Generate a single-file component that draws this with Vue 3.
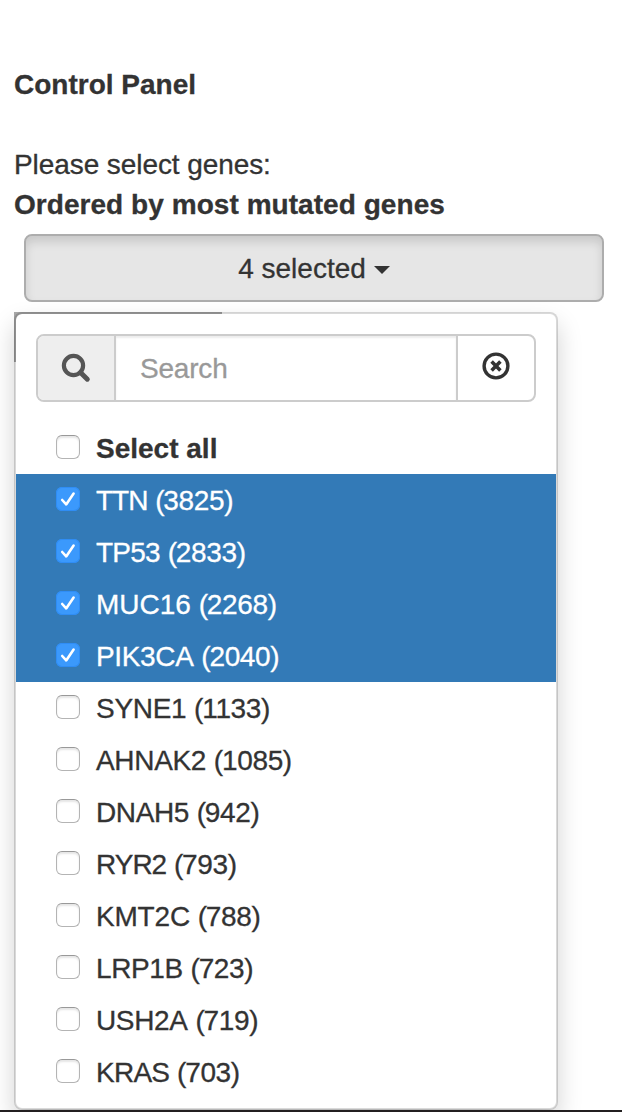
<script setup>
import { ref } from 'vue'

const genes = ref([
  { name: 'TTN', count: 3825, checked: true, tracking: -1 },
  { name: 'TP53', count: 2833, checked: true, tracking: -0.75 },
  { name: 'MUC16', count: 2268, checked: true, tracking: 0 },
  { name: 'PIK3CA', count: 2040, checked: true, tracking: -0.35 },
  { name: 'SYNE1', count: 1133, checked: false, tracking: -0.3 },
  { name: 'AHNAK2', count: 1085, checked: false, tracking: -0.33 },
  { name: 'DNAH5', count: 942, checked: false, tracking: -0.4 },
  { name: 'RYR2', count: 793, checked: false, tracking: -1 },
  { name: 'KMT2C', count: 788, checked: false, tracking: -0.2 },
  { name: 'LRP1B', count: 723, checked: false, tracking: -0.4 },
  { name: 'USH2A', count: 719, checked: false, tracking: -0.35 },
  { name: 'KRAS', count: 703, checked: false, tracking: -0.75 },
])
</script>

<template>
  <main class="panel">
    <h1 class="title">Control Panel</h1>
    <p class="line prompt">Please select genes:</p>
    <p class="line strong">Ordered by most mutated genes</p>
    <button class="toggle" type="button">
      <span>4 selected</span>
      <span class="caret"></span>
    </button>
    <div class="menu-wrap">
      <div class="native-select"></div>
      <div class="menu">
        <div class="search">
          <span class="addon">
            <svg width="30" height="30" viewBox="0 0 30 30">
              <circle cx="12.5" cy="12.5" r="9.6" fill="none" stroke="#555" stroke-width="4.2" />
              <path d="M19.5 19.5 L26.3 26.2" stroke="#555" stroke-width="5" stroke-linecap="round" />
            </svg>
          </span>
          <span class="field">Search</span>
          <span class="clear">
            <svg width="28" height="28" viewBox="0 0 28 28" fill="none" stroke="#333">
              <circle cx="14" cy="14" r="11.9" stroke-width="3.4" />
              <path d="M9.6 9.6 L18.4 18.4 M18.4 9.6 L9.6 18.4" stroke-width="3.6" />
            </svg>
          </span>
        </div>
        <ul class="list">
          <li class="row all"><span class="box"></span><span>Select all</span></li>
          <li
            v-for="g in genes"
            :key="g.name"
            class="row"
            :class="{ active: g.checked }"
            @click="g.checked = !g.checked"
          >
            <span class="box" :class="{ on: g.checked }">
              <svg v-if="g.checked" width="24" height="24" viewBox="0 0 24 24">
                <path d="M6.2 13 L10.2 17.4 L17.6 6.6" fill="none" stroke="#fff" stroke-width="2.6" stroke-linecap="round" stroke-linejoin="round" />
              </svg>
            </span>
            <span><span :style="{ letterSpacing: g.tracking + 'px' }">{{ g.name }}</span> <span class="paren">(</span><span class="count">{{ g.count }})</span></span>
          </li>
        </ul>
      </div>
    </div>
    <div class="edge"></div>
  </main>
</template>

<style>
body {
  margin: 0;
  background: #fff;
}
</style>

<style scoped>
.panel {
  box-sizing: border-box;
  width: 622px;
  height: 1112px;
  padding: 65px 18px 0 14px;
  overflow: hidden;
  display: flex;
  flex-direction: column;
  font: 28px/40px "Liberation Sans", Arial, sans-serif;
  color: #333;
  -webkit-text-stroke-width: 0.3px;
}
.title {
  margin: 0 0 40px;
  font-size: 28px;
  line-height: 40px;
  font-weight: 700;
}
.line {
  margin: 0;
}
.prompt {
  letter-spacing: -0.08px;
}
.strong {
  font-weight: 700;
  letter-spacing: 0.05px;
}
.toggle {
  box-sizing: border-box;
  flex: none;
  height: 68px;
  margin: 9px 0 10px 10px;
  padding: 2px 0 0;
  display: flex;
  align-items: center;
  justify-content: center;
  gap: 8px;
  font: inherit;
  color: #333;
  background: #e6e6e6;
  border: 2px solid #adadad;
  border-radius: 8px;
  box-shadow: inset 0 6px 10px rgba(0, 0, 0, 0.125);
}
.caret {
  border-top: 8px solid #333;
  border-left: 8px solid transparent;
  border-right: 8px solid transparent;
  margin-top: 2px;
}
.menu-wrap {
  flex: none;
  display: grid;
  width: 544px;
  height: 798px;
}
.menu-wrap > * {
  grid-area: 1 / 1;
}
.native-select {
  width: 208px;
  height: 50px;
  background: #a9a9a9;
}
.menu {
  box-sizing: border-box;
  padding: 20px 0 10px;
  background: #fff;
  background-clip: padding-box;
  border: 2px solid rgba(0, 0, 0, 0.15);
  border-radius: 8px;
  box-shadow: 0 12px 24px rgba(0, 0, 0, 0.175);
}
.search {
  box-sizing: border-box;
  display: flex;
  height: 68px;
  margin: 0 20px 20px;
  border: 2px solid #ccc;
  border-radius: 8px;
  overflow: hidden;
}
.addon {
  width: 76px;
  display: grid;
  place-items: center;
  background: #eee;
  border-right: 2px solid #ccc;
}
.field {
  flex: 1;
  padding: 13px 24px 11px;
  color: #999;
  letter-spacing: -0.2px;
  box-shadow: inset 0 2px 2px rgba(0, 0, 0, 0.075);
}
.clear {
  width: 78px;
  display: grid;
  place-items: center;
  padding-bottom: 4px;
  box-sizing: border-box;
  border-left: 2px solid #ccc;
}
.list {
  list-style: none;
  margin: 0;
  padding: 0;
}
.row {
  display: flex;
  gap: 16px;
  padding: 7px 40px 5px;
}
.all {
  font-weight: 700;
}
.active {
  color: #fff;
  background: #337ab7;
}
.paren {
  letter-spacing: -1.2px;
}
.count {
  letter-spacing: -0.35px;
}
.box {
  box-sizing: border-box;
  width: 24px;
  height: 24px;
  margin-top: 6px;
  border: 1px solid #b4b4b4;
  border-top-color: #999;
  border-radius: 6px;
  background: #fff;
  box-shadow: inset 0 2px 2px rgba(0, 0, 0, 0.1);
}
.box.on {
  border: 0;
  background: #3b99fc;
  box-shadow: inset 0 0 0 1px #2f8df5;
}
.box svg {
  display: block;
}
.edge {
  flex: none;
  height: 2px;
  margin: 0 -18px 0 -14px;
  position: relative;
  background: #231f20;
}
</style>
